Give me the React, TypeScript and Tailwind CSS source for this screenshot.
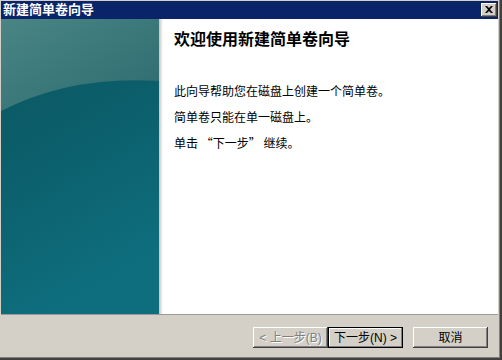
import React from "react";

const font = { fontFamily: '"Liberation Sans", "Noto Sans CJK SC", sans-serif' };
const cjk = { fontFamily: '"Noto Sans CJK SC", sans-serif' };

const bevel =
  "shadow-[inset_-1px_-1px_#404040,inset_1px_1px_#ffffff,inset_-2px_-2px_#808080,inset_2px_2px_#d4d0c8]";

const SidePanel = () => (
  <svg width="158" height="295" viewBox="0 0 158 295" className="block">
    <defs>
      <linearGradient id="low" x1="0" y1="0" x2="0.3" y2="1">
        <stop offset="0" stopColor="#0b5561" />
        <stop offset="0.5" stopColor="#0c5f6c" />
        <stop offset="1" stopColor="#0e6e7d" />
      </linearGradient>
      <linearGradient id="high" x1="0" y1="0" x2="1" y2="1">
        <stop offset="0" stopColor="#4a8584" />
        <stop offset="1" stopColor="#2c6b70" />
      </linearGradient>
    </defs>
    <rect width="158" height="295" fill="url(#low)" />
    <path d="M0 0 H158 V62 Q70 56 0 92 Z" fill="url(#high)" />
  </svg>
);

const App = () => {
  return (
    <div className="w-[502px] h-[360px] bg-[#404040] pr-[2px] pb-[2px]" style={font}>
      <div className="w-full h-full bg-[#808080] pr-px pb-px">
        <div className="w-full h-full bg-[#d4d0c8] pl-px pt-px pr-px flex flex-col">
          {/* Title bar */}
          <div className="h-[18px] bg-[#0a246a] flex items-center justify-between pl-[2px] pr-[1px]">
            <span className="text-white text-[13px] font-bold leading-[18px]">新建简单卷向导</span>
            <div className={`w-[16px] h-[14px] bg-[#d4d0c8] flex items-center justify-center ${bevel}`}>
              <svg width="8" height="7" viewBox="0 0 8 7" className="-mt-px -ml-px">
                <path d="M0 0h2l2 2 2-2h2L5 3.5 8 7H6L4 5 2 7H0l3-3.5z" fill="#000" />
              </svg>
            </div>
          </div>

          {/* Body */}
          <div className="h-[295px] flex bg-white">
            <SidePanel />
            <div className="w-[4px] bg-gradient-to-r from-[#c4c4c4] to-white" />
            <div className="flex-1 pl-[11px] pt-[11px] text-black">
              <h1 className="text-[16px] font-bold leading-[20px]">欢迎使用新建简单卷向导</h1>
              <p className="mt-[34px] text-[12px] leading-[16px]">此向导帮助您在磁盘上创建一个简单卷。</p>
              <p className="mt-[10px] text-[12px] leading-[16px]">简单卷只能在单一磁盘上。</p>
              <p className="mt-[9px] text-[12px] leading-[16px]" style={cjk}>
                单击 “下一步” 继续。
              </p>
            </div>
          </div>

          {/* Separator */}
          <div className="h-px bg-[#9a9a9a]" />

          {/* Buttons */}
          <div className="flex-1 flex items-start justify-end pt-[12px] pr-[10px] text-[12px]">
            <button
              className={`w-[75px] h-[21px] bg-[#d4d0c8] text-[#808080] [text-shadow:1px_1px_0_#ffffff] ${bevel}`}
            >
              &lt; 上一步(B)
            </button>
            <button className="w-[75px] h-[21px] bg-[#d4d0c8] border border-black text-black shadow-[inset_-1px_-1px_#808080,inset_1px_1px_#ffffff]">
              下一步(N) &gt;
            </button>
            <button className={`ml-[10px] w-[75px] h-[21px] bg-[#d4d0c8] text-black ${bevel}`}>取消</button>
          </div>
        </div>
      </div>
    </div>
  );
};

export default App;
